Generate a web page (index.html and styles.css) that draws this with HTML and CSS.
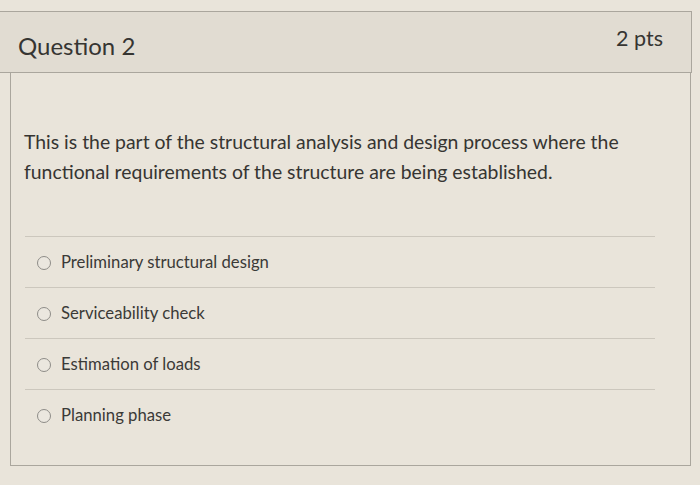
FILE: index.html
```html
<!DOCTYPE html>
<html>
<head>
<meta charset="utf-8">
<link rel="stylesheet" href="styles.css">
</head>
<body>
<div class="quiz">
  <div class="header">
    <span class="title">Question 2</span>
    <span class="pts">2 pts</span>
  </div>
  <div class="content">
    <p class="text">This is the part of the structural analysis and design process where the functional requirements of the structure are being established.</p>
    <div class="answers">
      <label class="answer"><span class="radio"></span><span>Preliminary structural design</span></label>
      <label class="answer"><span class="radio"></span><span>Serviceability check</span></label>
      <label class="answer"><span class="radio"></span><span>Estimation of loads</span></label>
      <label class="answer"><span class="radio"></span><span>Planning phase</span></label>
    </div>
  </div>
</div>
</body>
</html>
```
FILE: styles.css
```css
html, body {
  margin: 0;
  padding: 0;
  background: #e9e4da;
  font-family: Lato, "Open Sans", sans-serif;
  color: #363532;
}
.quiz {
  padding-top: 11px;
  width: 700px;
  height: 485px;
  box-sizing: border-box;
}
.header {
  width: 692px;
  height: 62px;
  box-sizing: border-box;
  background: #e1dcd2;
  border-top: 1px solid #aaa69d;
  border-bottom: 1px solid #aaa69d;
  border-right: 1px solid #aaa69d;
  display: flex;
  justify-content: space-between;
  align-items: flex-start;
  padding: 0 28px 0 18px;
}
.title {
  font-size: 24px;
  line-height: 28px;
  padding-top: 20px;
}
.pts {
  font-size: 21.5px;
  line-height: 26px;
  padding-top: 13px;
}
.content {
  margin-left: 10px;
  width: 681px;
  height: 393px;
  box-sizing: border-box;
  border-left: 1px solid #aaa69d;
  border-right: 1px solid #aaa69d;
  border-bottom: 1px solid #aaa69d;
  padding-top: 54px;
}
.text {
  margin: 0 0 49px 13px;
  width: 640px;
  font-size: 19.4px;
  line-height: 30px;
}
.answers {
  margin-left: 14px;
  width: 630px;
}
.answer {
  display: flex;
  align-items: center;
  height: 50px;
  border-top: 1px solid #ccc7bd;
  font-size: 16.7px;
  color: #3b3a37;
}
.radio {
  width: 12px;
  height: 12px;
  border: 1.7px solid #8e8c88;
  border-radius: 50%;
  margin: 2px 10px 0 12px;
  background: #ebe7df;
}
```
